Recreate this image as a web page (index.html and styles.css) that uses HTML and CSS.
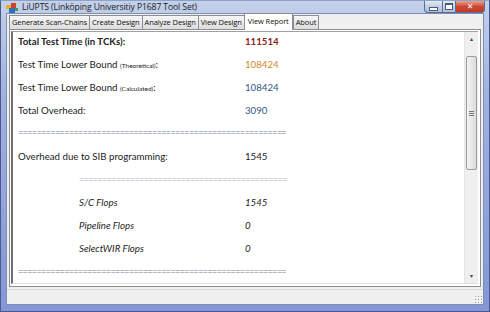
FILE: index.html
```html
<!DOCTYPE html>
<html lang="en">
<head>
  <meta charset="UTF-8">
  <title>LiUPTS</title>
  <link rel="stylesheet" href="styles.css">
</head>
<body>
  <div class="window">
    <div class="titlebar">
      <svg class="app-icon" width="12" height="10" viewBox="0 0 12 10">
        <rect x="0" y="2" width="5" height="4" fill="#e8b030"/>
        <rect x="5" y="0" width="5" height="5" fill="#d04030"/>
        <rect x="3" y="5" width="6" height="5" fill="#3070c0"/>
        <rect x="9" y="5" width="3" height="3" fill="#40a040"/>
      </svg>
      <span class="title">LiUPTS (Linköping Universitiy P1687 Tool Set)</span>
      <div class="controls">
        <span class="btn min"><i></i></span>
        <span class="btn max"><i></i></span>
        <span class="btn close">✕</span>
      </div>
    </div>
    <div class="client">
      <div class="tabs">
        <span class="tab">Generate Scan-Chains</span>
        <span class="tab">Create Design</span>
        <span class="tab">Analyze Design</span>
        <span class="tab">View Design</span>
        <span class="tab active">View Report</span>
        <span class="tab">About</span>
      </div>
      <div class="page">
        <div class="report">
          <div class="lines">
            <div class="row"><b>Total Test Time (in TCKs):</b><b class="red">111514</b></div>
            <div class="row"><span>Test Time Lower Bound <small>(Theoretical)</small>:</span><span class="orange">108424</span></div>
            <div class="row"><span>Test Time Lower Bound <small>(Calculated)</small>:</span><span class="blue">108424</span></div>
            <div class="row"><span>Total Overhead:</span><span class="blue">3090</span></div>
            <div class="row sep">==========================================================</div>
            <div class="row"><span>Overhead due to SIB programming:</span><span>1545</span></div>
            <div class="row sep sub light">=============================================</div>
            <div class="row sub"><i>S/C Flops</i><i>1545</i></div>
            <div class="row sub"><i>Pipeline Flops</i><i>0</i></div>
            <div class="row sub"><i>SelectWIR Flops</i><i>0</i></div>
            <div class="row sep">==========================================================</div>
          </div>
          <div class="scrollbar">
            <span class="arrow">▴</span>
            <div class="track"><div class="thumb"><span class="grip-lines"></span></div></div>
            <span class="arrow">▾</span>
          </div>
        </div>
      </div>
      <div class="status"><span class="resize"></span></div>
    </div>
  </div>
</body>
</html>
```

FILE: styles.css
```css
body { margin: 0; background: #fff; }
.window { width: 490px; height: 312px; box-sizing: border-box; display: flex; flex-direction: column; background: linear-gradient(#c3d1ea, #a0b2e0 30%, #8496d6); border: 1px solid #4b5a8c; border-top-color: #8ea2c8; padding: 0 5px 6px 5px; }
.titlebar { height: 16px; display: flex; align-items: center; font-family: "Open Sans", sans-serif; font-size: 8.6px; color: #1a1a1a; }
.app-icon { margin: 1px 4px 0 0; }
.title { letter-spacing: -0.1px; }
.controls { margin-left: auto; align-self: flex-start; display: flex; margin-right: -1px; }
.btn { height: 12px; border: 1px solid #5b6f94; border-top: 0; box-sizing: border-box; display: flex; align-items: center; justify-content: center; background: linear-gradient(#e3ebf6, #c1cfe4 50%, #aebfd9); }
.min { width: 19px; border-radius: 0 0 0 4px; }
.max { width: 13px; border-left: 0; }
.close { width: 29px; border-left: 0; border-radius: 0 0 4px 0; background: linear-gradient(#e9a594, #cc4a32 50%, #c2362a); color: #fff; font-family: "DejaVu Sans", sans-serif; font-size: 8px; font-weight: bold; }
.min i { width: 7px; height: 2px; background: #fff; border: 1px solid #4a5a78; margin-top: 4px; }
.max i { width: 6px; height: 4px; border: 1px solid #4a5a78; border-top-width: 2px; background: #fff; }
.client { flex: 1; background: #f0f0f0; display: flex; flex-direction: column; border: 1px solid #7d8eb4; }
.tabs { height: 15px; display: flex; align-items: flex-end; padding-left: 2px; font-family: "Open Sans", sans-serif; font-size: 7.5px; color: #111; position: relative; z-index: 1; }
.tab { height: 13px; line-height: 13px; padding: 0 2px; border: 1px solid #8c8e94; border-bottom: 0; margin-right: -1px; background: linear-gradient(#f7f7f7, #e9e9e9 50%, #dcdcdc); letter-spacing: -0.1px; }
.tab.active { height: 16px; line-height: 15px; background: #fff; margin: 0 0 -1px 0; padding: 0 3px; }
.page { flex: 1; margin: 0 2px 0 2px; border: 1px solid #8c8e94; background: #fff; padding: 1px 2px 2px 1px; display: flex; }
.report { flex: 1; display: flex; border-left: 2px solid #707070; border-top: 1px solid #a0a0a0; border-bottom: 1px solid #e0e0e0; overflow: hidden; background: #fff; }
.lines { flex: 1; margin-top: -3px; padding-left: 5px; font-family: Lato, sans-serif; font-size: 9.7px; color: #222; }
.row { height: 23.1px; display: grid; grid-template-columns: 227px 1fr; align-items: center; white-space: nowrap; }
.row small { font-size: 6.5px; }
.row.sub { padding-left: 61px; grid-template-columns: 166px 1fr; }
.row.sep { display: block; line-height: 23px; color: #6d7a9a; font-size: 9px; letter-spacing: -0.6px; }
.row.sep.light { color: #a8b0c8; }
.red { color: #8a2525; }
.orange { color: #d2872f; }
.blue { color: #2f5687; }
.scrollbar { width: 13px; display: flex; flex-direction: column; background: #efefef; border-left: 1px solid #e4e4e4; }
.arrow { height: 14px; text-align: center; font-size: 6px; line-height: 14px; color: #444; font-family: "DejaVu Sans", sans-serif; }
.track { flex: 1; padding-top: 10px; }
.thumb { height: 112px; margin: 0 1px; border: 1px solid #9a9a9a; border-radius: 2px; background: linear-gradient(90deg, #f2f2f2, #dcdcdc); display: flex; align-items: center; justify-content: center; }
.grip-lines { width: 5px; height: 5px; background: repeating-linear-gradient(#777 0 1px, transparent 1px 2px); }
.status { height: 14px; border-top: 1px solid #dadada; margin-top: 2px; display: flex; justify-content: flex-end; align-items: flex-end; }
.resize { width: 8px; height: 8px; margin: 0 1px 1px 0; background: radial-gradient(circle, #9a9a9a 0.7px, transparent 1px) 0 0 / 3px 3px; }
```
